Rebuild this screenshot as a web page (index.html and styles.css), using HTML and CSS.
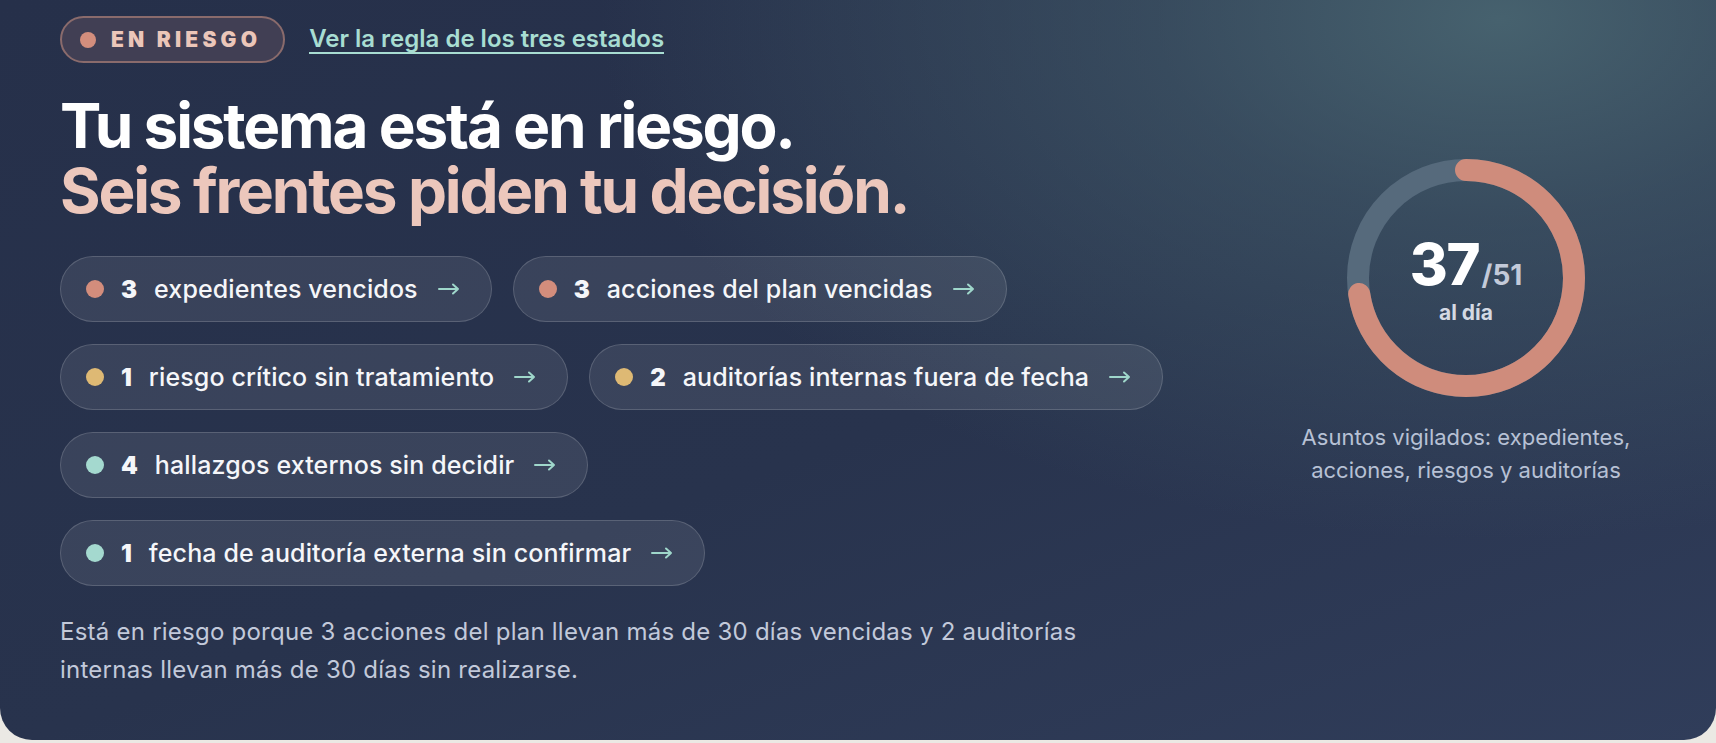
FILE: index.html
```html
<!DOCTYPE html>
<html lang="es">
<head>
<meta charset="utf-8">
<title>Estado del sistema</title>
<link rel="stylesheet" href="styles.css">
</head>
<body>
<section class="card">
  <div class="main">
    <div class="topline">
      <span class="status"><span class="status-dot"></span>EN RIESGO</span>
      <a class="rule-link" href="#">Ver la regla de los tres estados</a>
    </div>
    <h1 class="title">
      <span class="title-a">Tu sistema está en riesgo.</span>
      <span class="title-b">Seis frentes piden tu decisión.</span>
    </h1>
    <div class="chips">
      <div class="chip-row">
        <a class="chip" href="#"><span class="dot dot-red"></span><span class="num">3</span><span class="label">expedientes vencidos</span><svg class="arrow" viewBox="0 0 22 12"><path d="M1 6H20M15 1.5L20 6L15 10.5"/></svg></a>
        <a class="chip" href="#"><span class="dot dot-red"></span><span class="num">3</span><span class="label">acciones del plan vencidas</span><svg class="arrow" viewBox="0 0 22 12"><path d="M1 6H20M15 1.5L20 6L15 10.5"/></svg></a>
      </div>
      <div class="chip-row">
        <a class="chip" href="#"><span class="dot dot-yellow"></span><span class="num">1</span><span class="label">riesgo crítico sin tratamiento</span><svg class="arrow" viewBox="0 0 22 12"><path d="M1 6H20M15 1.5L20 6L15 10.5"/></svg></a>
        <a class="chip" href="#"><span class="dot dot-yellow"></span><span class="num">2</span><span class="label">auditorías internas fuera de fecha</span><svg class="arrow" viewBox="0 0 22 12"><path d="M1 6H20M15 1.5L20 6L15 10.5"/></svg></a>
      </div>
      <div class="chip-row">
        <a class="chip" href="#"><span class="dot dot-teal"></span><span class="num">4</span><span class="label">hallazgos externos sin decidir</span><svg class="arrow" viewBox="0 0 22 12"><path d="M1 6H20M15 1.5L20 6L15 10.5"/></svg></a>
      </div>
      <div class="chip-row">
        <a class="chip" href="#"><span class="dot dot-teal"></span><span class="num">1</span><span class="label">fecha de auditoría externa sin confirmar</span><svg class="arrow" viewBox="0 0 22 12"><path d="M1 6H20M15 1.5L20 6L15 10.5"/></svg></a>
      </div>
    </div>
    <p class="reason">Está en riesgo porque 3 acciones del plan llevan más de 30 días vencidas y 2 auditorías internas llevan más de 30 días sin realizarse.</p>
  </div>
  <aside class="side">
    <div class="gauge">
      <svg class="ring" viewBox="0 0 238 238">
        <circle class="ring-track" cx="119" cy="119" r="108"/>
        <circle class="ring-value" cx="119" cy="119" r="108" stroke-dasharray="492.3 678.6" transform="rotate(-90 119 119)"/>
      </svg>
      <div class="gauge-text">
        <div class="gauge-num"><span class="big">37</span><span class="total">/51</span></div>
        <div class="gauge-sub">al día</div>
      </div>
    </div>
    <p class="caption">Asuntos vigilados: expedientes, acciones, riesgos y auditorías</p>
  </aside>
</section>
</body>
</html>
```

FILE: styles.css
```css
* { box-sizing: border-box; }

html, body {
  margin: 0;
  padding: 0;
}

body {
  background: #ebe9e4;
  font-family: Inter, "Liberation Sans", Arial, sans-serif;
  height: 743px;
  overflow: hidden;
}

.card {
  height: 740px;
  border-radius: 0 0 32px 32px;
  padding: 16px 60px 0 60px;
  display: grid;
  grid-template-columns: 1fr 380px;
  background:
    radial-gradient(ellipse 900px 520px at 1500px 20px, rgba(72, 100, 112, 0.95) 0%, rgba(72, 100, 112, 0.5) 38%, rgba(72, 100, 112, 0) 100%),
    linear-gradient(160deg, #26304a 0%, #28334d 55%, #303d5a 100%);
  color: #fff;
}

.main {
  display: flex;
  flex-direction: column;
  align-items: flex-start;
}

.topline {
  display: flex;
  align-items: center;
  gap: 24px;
}

.status {
  display: inline-flex;
  align-items: center;
  gap: 15px;
  height: 47px;
  padding: 0 22px 0 18px;
  border: 2px solid #8a6b6c;
  border-radius: 999px;
  background: #413f54;
  color: #ebc6b9;
  font-weight: 900;
  font-size: 21px;
  letter-spacing: 0.2em;
}

.status-dot {
  width: 16px;
  height: 16px;
  border-radius: 50%;
  background: #d38e7d;
}

.rule-link {
  color: #a8ddd2;
  text-decoration: none;
  font-size: 24px;
  font-weight: 600;
  border-bottom: 2px solid #a8ddd2;
  letter-spacing: 0;
  line-height: 27px;
}

.title {
  margin: 30px 0 0 0;
  font-size: 62px;
  line-height: 65px;
  font-weight: 700;
  letter-spacing: -0.035em;
}

.title-a, .title-b { display: block; }
.title-a { color: #ffffff; }
.title-b { color: #ecc7bc; }

.chips {
  margin-top: 33px;
  display: flex;
  flex-direction: column;
  gap: 22px;
}

.chip-row {
  display: flex;
  gap: 21px;
}

.chip {
  display: inline-flex;
  align-items: center;
  gap: 17px;
  height: 66px;
  padding: 0 31px 0 25px;
  border: 1.5px solid rgba(255, 255, 255, 0.16);
  border-radius: 999px;
  background: rgba(255, 255, 255, 0.085);
  color: #f5f6f9;
  text-decoration: none;
  font-size: 25px;
}

.dot {
  width: 18px;
  height: 18px;
  border-radius: 50%;
  flex: none;
}
.dot-red { background: #d38d7c; }
.dot-yellow { background: #deb974; }
.dot-teal { background: #a4d9cf; }

.num {
  font-weight: 900;
  font-size: 24px;
}

.label {
  font-weight: 500;
  letter-spacing: 0.005em;
}

.arrow {
  width: 22px;
  height: 12px;
  margin-left: 3px;
  fill: none;
  stroke: #9fd7cb;
  stroke-width: 2;
  stroke-linecap: round;
  stroke-linejoin: round;
}

.reason {
  margin: 27px 0 0 0;
  max-width: 1060px;
  font-size: 24px;
  line-height: 38px;
  letter-spacing: 0.01em;
  color: #c2c9da;
}

.side {
  display: flex;
  flex-direction: column;
  align-items: center;
  padding-top: 143px;
}

.gauge {
  position: relative;
  width: 238px;
  height: 238px;
}

.ring {
  width: 238px;
  height: 238px;
  display: block;
}

.ring-track {
  fill: none;
  stroke: #566a7c;
  stroke-width: 22;
}

.ring-value {
  fill: none;
  stroke: #cf8c7c;
  stroke-width: 22;
  stroke-linecap: round;
}

.gauge-text {
  position: absolute;
  inset: 0;
  display: flex;
  flex-direction: column;
  align-items: center;
  justify-content: center;
  padding-top: 2px;
}

.gauge-num {
  display: flex;
  align-items: baseline;
  line-height: 1;
}

.big {
  font-size: 58px;
  font-weight: 800;
  letter-spacing: -0.02em;
  color: #ffffff;
}

.total {
  font-size: 28px;
  font-weight: 700;
  color: #c3cad9;
  margin-left: 2px;
}

.gauge-sub {
  margin-top: 9px;
  font-size: 21px;
  font-weight: 700;
  color: #d4d9e3;
  line-height: 1;
}

.caption {
  margin: 24px 0 0 0;
  max-width: 370px;
  text-align: center;
  font-size: 22px;
  line-height: 33px;
  color: #b7c1d5;
}
```
